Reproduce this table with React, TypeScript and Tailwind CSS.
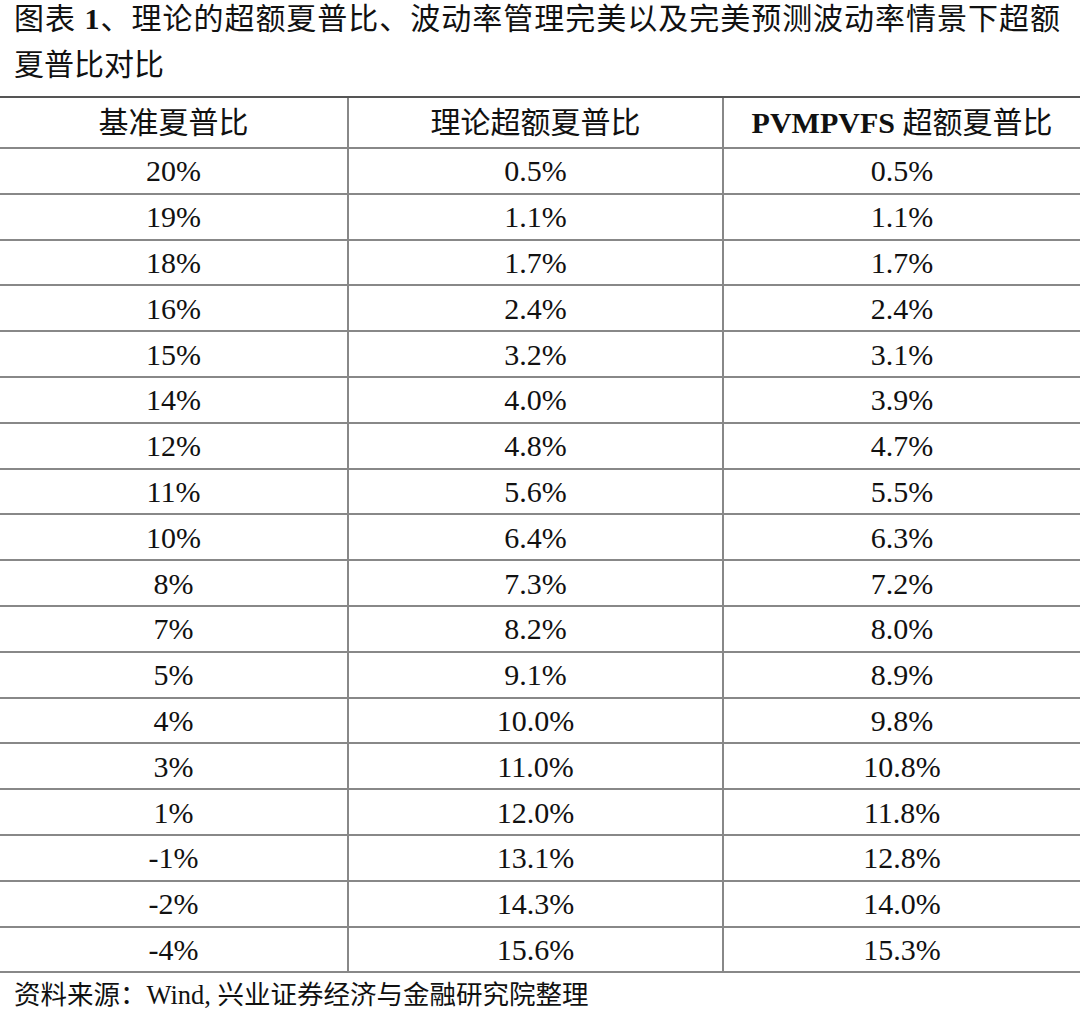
import React from "react";

const rows: [string, string, string][] = [
  ["20%", "0.5%", "0.5%"],
  ["19%", "1.1%", "1.1%"],
  ["18%", "1.7%", "1.7%"],
  ["16%", "2.4%", "2.4%"],
  ["15%", "3.2%", "3.1%"],
  ["14%", "4.0%", "3.9%"],
  ["12%", "4.8%", "4.7%"],
  ["11%", "5.6%", "5.5%"],
  ["10%", "6.4%", "6.3%"],
  ["8%", "7.3%", "7.2%"],
  ["7%", "8.2%", "8.0%"],
  ["5%", "9.1%", "8.9%"],
  ["4%", "10.0%", "9.8%"],
  ["3%", "11.0%", "10.8%"],
  ["1%", "12.0%", "11.8%"],
  ["-1%", "13.1%", "12.8%"],
  ["-2%", "14.3%", "14.0%"],
  ["-4%", "15.6%", "15.3%"],
];

export default function App() {
  return (
    <div
      className="w-[1080px] h-[1016px] bg-white text-[#111] overflow-hidden"
      style={{ fontFamily: '"Liberation Serif", "Noto Sans CJK SC", serif' }}
    >
      <div className="h-[96px] pl-[14px] pr-[20px] text-[30px]">
        <div className="leading-[37px] text-justify [text-align-last:justify] whitespace-nowrap">
          图表 <span className="font-bold">1</span>、理论的超额夏普比、波动率管理完美以及完美预测波动率情景下超额
        </div>
        <div className="leading-[56px]">夏普比对比</div>
      </div>
      <div className="border-t-2 border-[#555]">
        <div className="grid grid-cols-[349px_375px_1fr] text-[30px]">
          <div className="h-[51px] flex items-center justify-center border-b-2 border-r-2 border-[#888]">基准夏普比</div>
          <div className="h-[51px] flex items-center justify-center border-b-2 border-r-2 border-[#888]">理论超额夏普比</div>
          <div className="h-[51px] flex items-center justify-center border-b-2 border-[#888]">
            <span className="font-bold">PVMPVFS</span>&nbsp;超额夏普比
          </div>
          {rows.map((r, i) => (
            <React.Fragment key={i}>
              <div className="h-[45.8px] flex items-center justify-center border-b-2 border-r-2 border-[#888]">{r[0]}</div>
              <div className="h-[45.8px] flex items-center justify-center border-b-2 border-r-2 border-[#888]">{r[1]}</div>
              <div className="h-[45.8px] flex items-center justify-center border-b-2 border-[#888]">{r[2]}</div>
            </React.Fragment>
          ))}
        </div>
      </div>
      <div className="pl-[14px] pt-[4px] text-[26.5px] leading-[36px]">
        资料来源：Wind, 兴业证券经济与金融研究院整理
      </div>
    </div>
  );
}
